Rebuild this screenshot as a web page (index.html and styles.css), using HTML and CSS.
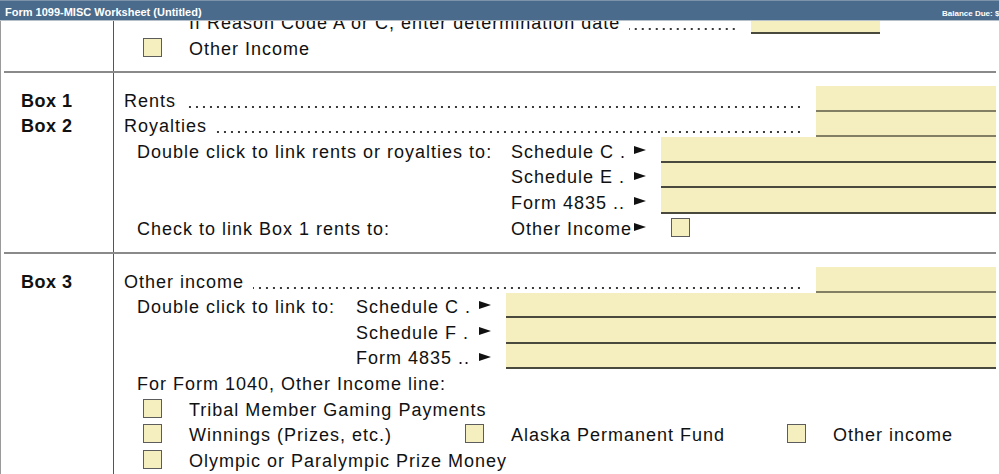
FILE: index.html
```html
<!DOCTYPE html>
<html lang="en">
<head>
  <meta charset="UTF-8" />
  <meta name="viewport" content="width=device-width, initial-scale=1.0"/>
  <title>Form 1099-MISC Worksheet</title>
  <link rel="stylesheet" href="styles.css">
</head>
<body>

<div class="title-bar">
  <div class="title">Form 1099-MISC Worksheet (Untitled)</div>
  <div class="balance">Balance Due: $<span class="amount">0.00</span></div>
</div>

<div class="sheet">

  <div class="section section-top">
    <div class="box-col"></div>
    <div class="line-col">
      <div class="row opt-plain">
        <span>If Reason Code A or C, enter determination date</span>
        <span class="leader"></span>
        <span class="field field-date"></span>
      </div>
      <div class="row opt">
        <div class="opt-item"><span class="check"></span><span>Other Income</span></div>
      </div>
    </div>
  </div>

  <div class="section">
    <div class="box-col">
      <div class="box-label">Box 1</div>
      <div class="box-label">Box 2</div>
    </div>
    <div class="line-col">
      <div class="row">
        <span>Rents</span>
        <span class="leader"></span>
        <span class="field field-amount"></span>
      </div>
      <div class="row">
        <span>Royalties</span>
        <span class="leader"></span>
        <span class="field field-amount"></span>
      </div>
      <div class="row sub">
        <span class="prefix">Double click to link rents or royalties to:</span>
        <span class="link-label">Schedule C .</span>
        <svg class="arrow" viewBox="0 0 12 8"><polygon points="0,0 12,4 0,8"/></svg>
        <span class="field field-link"></span>
      </div>
      <div class="row sub">
        <span class="prefix"></span>
        <span class="link-label">Schedule E .</span>
        <svg class="arrow" viewBox="0 0 12 8"><polygon points="0,0 12,4 0,8"/></svg>
        <span class="field field-link"></span>
      </div>
      <div class="row sub">
        <span class="prefix"></span>
        <span class="link-label">Form 4835 ..</span>
        <svg class="arrow" viewBox="0 0 12 8"><polygon points="0,0 12,4 0,8"/></svg>
        <span class="field field-link"></span>
      </div>
      <div class="row sub">
        <span class="prefix">Check to link Box 1 rents to:</span>
        <span class="link-label">Other Income</span>
        <svg class="arrow" viewBox="0 0 12 8"><polygon points="0,0 12,4 0,8"/></svg>
        <span class="check link-check"></span>
      </div>
    </div>
  </div>

  <div class="section">
    <div class="box-col">
      <div class="box-label">Box 3</div>
    </div>
    <div class="line-col">
      <div class="row">
        <span>Other income</span>
        <span class="leader"></span>
        <span class="field field-amount"></span>
      </div>
      <div class="row sub">
        <span class="prefix prefix-short">Double click to link to:</span>
        <span class="link-label">Schedule C .</span>
        <svg class="arrow" viewBox="0 0 12 8"><polygon points="0,0 12,4 0,8"/></svg>
        <span class="field field-link"></span>
      </div>
      <div class="row sub">
        <span class="prefix prefix-short"></span>
        <span class="link-label">Schedule F .</span>
        <svg class="arrow" viewBox="0 0 12 8"><polygon points="0,0 12,4 0,8"/></svg>
        <span class="field field-link"></span>
      </div>
      <div class="row sub">
        <span class="prefix prefix-short"></span>
        <span class="link-label">Form 4835 ..</span>
        <svg class="arrow" viewBox="0 0 12 8"><polygon points="0,0 12,4 0,8"/></svg>
        <span class="field field-link"></span>
      </div>
      <div class="row sub">
        <span>For Form 1040, Other Income line:</span>
      </div>
      <div class="row opt">
        <div class="opt-item"><span class="check"></span><span>Tribal Member Gaming Payments</span></div>
      </div>
      <div class="row opt">
        <div class="opt-item"><span class="check"></span><span>Winnings (Prizes, etc.)</span></div>
        <div class="opt-item"><span class="check"></span><span>Alaska Permanent Fund</span></div>
        <div class="opt-item opt-last"><span class="check"></span><span>Other income</span></div>
      </div>
      <div class="row opt">
        <div class="opt-item"><span class="check"></span><span>Olympic or Paralympic Prize Money</span></div>
      </div>
    </div>
  </div>

</div>

</body>
</html>
```

FILE: styles.css
```css
* {
  box-sizing: border-box;
}

html, body {
  overflow: hidden;
}

body {
  margin: 0;
  background: white;
  color: #111;
  font-family: "Liberation Sans", Arial, sans-serif;
}

/* window title */

.title-bar {
  display: flex;
  align-items: center;
  height: 21px;
  background: #4a6b8b;
  border-top: 1px solid #7c93aa;
  border-bottom: 1px solid #b5c0cb;
  color: white;
  font-weight: bold;
}

.title {
  flex: 1;
  padding: 2px 0 0 5px;
  font-size: 11px;
}

.balance {
  flex: 0 0 57px;
  padding-top: 6px;
  overflow: hidden;
  white-space: nowrap;
  font-size: 8px;
}

.balance .amount {
  color: #e0453a;
}

/* worksheet */

.sheet {
  border-left: 1px solid #9a9a9a;
}

.section {
  display: grid;
  grid-template-columns: 109px minmax(0, 1fr);
  margin: 0 3px;
  border-bottom: 2px solid #8a8a8a;
}

.box-col,
.line-col {
  padding: 13px 0 12.4px;
}

.box-col {
  padding-left: 17px;
}

.line-col {
  min-width: 0;
  padding-left: 10px;
  border-left: 1px solid #555;
}

.section-top {
  height: 52px;
  overflow: hidden;
}

.section-top .box-col,
.section-top .line-col {
  padding-top: 0;
  padding-bottom: 0;
}

.section-top .line-col {
  margin-top: -12.6px;
}

.box-label {
  display: flex;
  align-items: flex-end;
  height: 25.6px;
  font-size: 18px;
  font-weight: bold;
  letter-spacing: 0.5px;
}

.row {
  display: flex;
  align-items: flex-end;
  height: 25.6px;
  font-size: 18px;
  letter-spacing: 1px;
  white-space: nowrap;
}

.row.sub {
  padding-left: 13px;
}

.row.opt {
  padding-left: 19px;
}

.row.opt-plain {
  padding-left: 65px;
}

/* dotted leader */
.leader {
  flex: 1;
  align-self: stretch;
  margin: 0 16px 0 9px;
  background-image: linear-gradient(to right, transparent 5px, #3a3a3a 5px);
  background-size: 7px 2px;
  background-repeat: repeat-x;
  background-position: right 0 bottom 4px;
}

.field {
  align-self: stretch;
  background: #f5efbf;
  border-bottom: 2px solid #827f64;
}

.field-amount {
  flex: 0 0 180px;
}

.field-link {
  flex: 1;
  margin-left: 15px;
  border-bottom-color: #4a493e;
}

.field-date {
  flex: 0 0 129px;
  margin-right: 116px;
  border-bottom-color: #4a493e;
}

.prefix {
  flex: 0 0 374px;
}

.prefix-short {
  flex-basis: 219px;
}

.link-label {
  flex: 0 0 123px;
}

.arrow {
  flex: 0 0 12px;
  height: 8px;
  align-self: center;
  fill: #111;
}

.check {
  flex: 0 0 19px;
  height: 19px;
  margin-bottom: 3px;
  background: #f5efbf;
  border: 1px solid #5c5c5c;
}

.link-check {
  margin-left: 25px;
}

.opt-item {
  display: flex;
  align-items: flex-end;
  flex: 0 0 322px;
}

.opt-item.opt-last {
  flex: 1;
}

.opt-item .check {
  margin-right: 27px;
}
```
